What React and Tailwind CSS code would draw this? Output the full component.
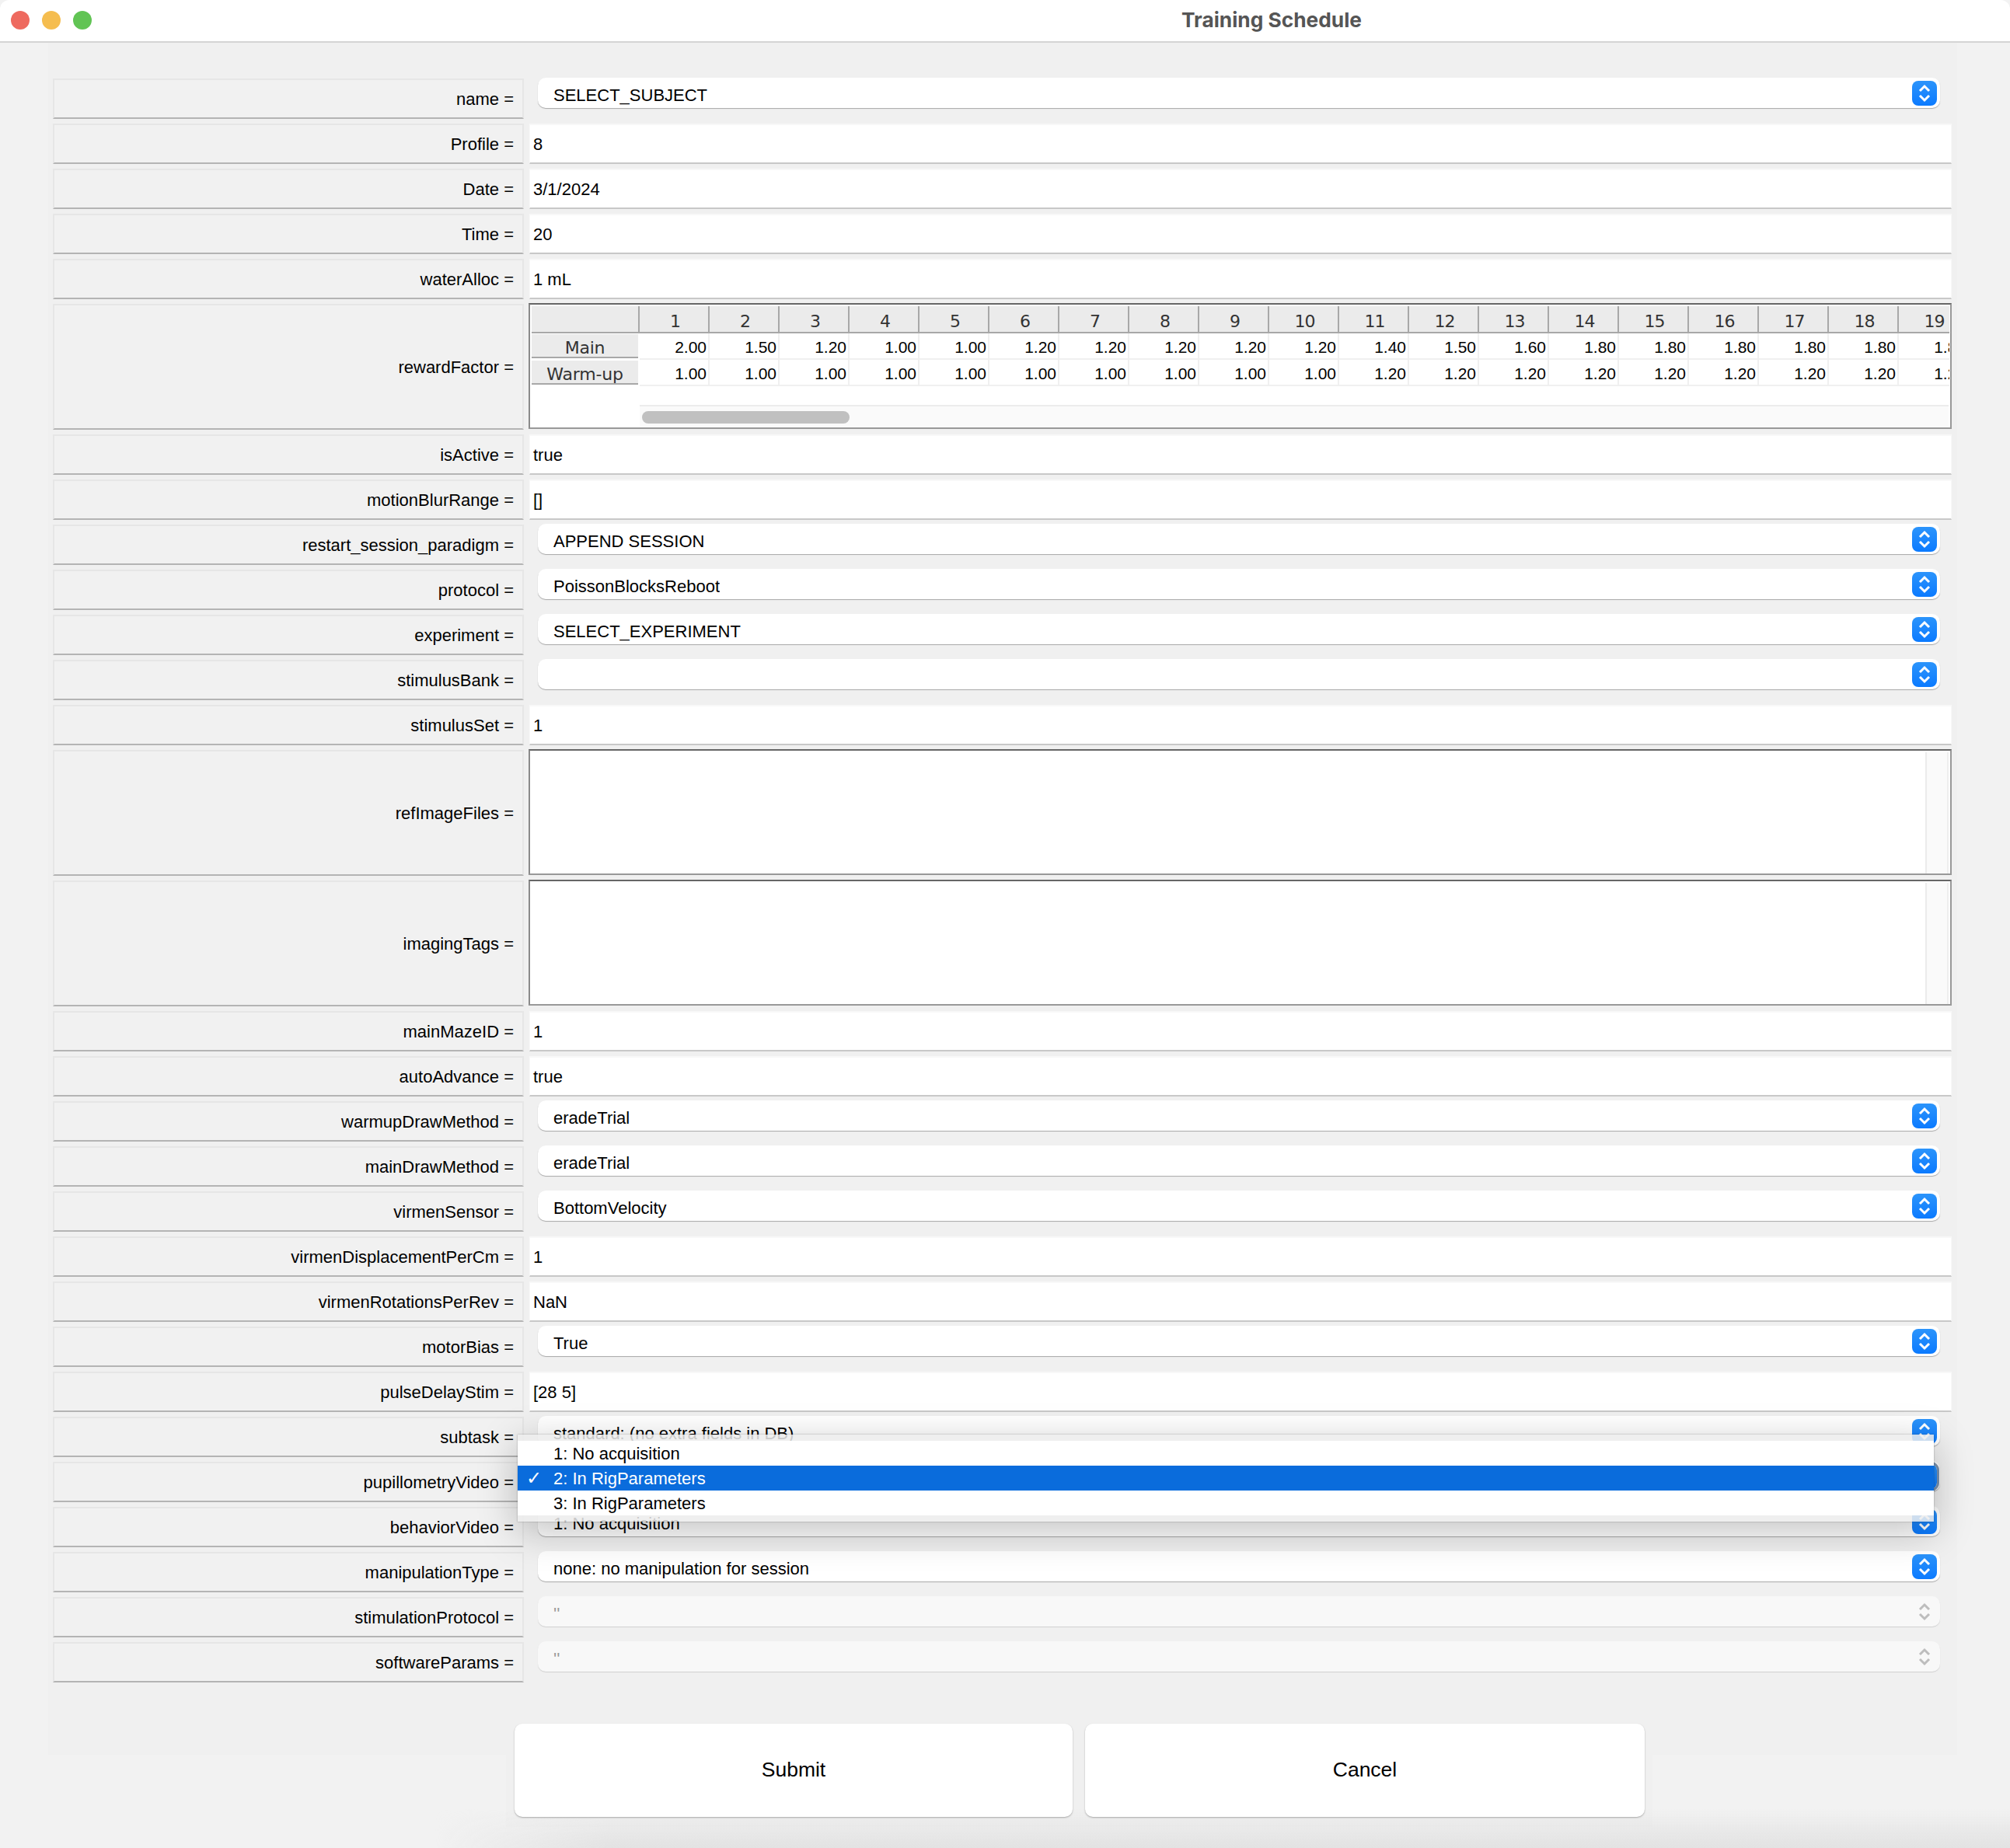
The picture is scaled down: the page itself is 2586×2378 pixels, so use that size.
const font = "font-['Liberation_Sans',Arial,sans-serif]";

const rows = [
    { label: 'name', kind: 'select', value: 'SELECT_SUBJECT' },
    { label: 'Profile', kind: 'input', value: '8' },
    { label: 'Date', kind: 'input', value: '3/1/2024' },
    { label: 'Time', kind: 'input', value: '20' },
    { label: 'waterAlloc', kind: 'input', value: '1 mL' },
    { label: 'rewardFactor', kind: 'table' },
    { label: 'isActive', kind: 'input', value: 'true' },
    { label: 'motionBlurRange', kind: 'input', value: '[]' },
    { label: 'restart_session_paradigm', kind: 'select', value: 'APPEND SESSION' },
    { label: 'protocol', kind: 'select', value: 'PoissonBlocksReboot' },
    { label: 'experiment', kind: 'select', value: 'SELECT_EXPERIMENT' },
    { label: 'stimulusBank', kind: 'select', value: '' },
    { label: 'stimulusSet', kind: 'input', value: '1' },
    { label: 'refImageFiles', kind: 'list' },
    { label: 'imagingTags', kind: 'list' },
    { label: 'mainMazeID', kind: 'input', value: '1' },
    { label: 'autoAdvance', kind: 'input', value: 'true' },
    { label: 'warmupDrawMethod', kind: 'select', value: 'eradeTrial' },
    { label: 'mainDrawMethod', kind: 'select', value: 'eradeTrial' },
    { label: 'virmenSensor', kind: 'select', value: 'BottomVelocity' },
    { label: 'virmenDisplacementPerCm', kind: 'input', value: '1' },
    { label: 'virmenRotationsPerRev', kind: 'input', value: 'NaN' },
    { label: 'motorBias', kind: 'select', value: 'True' },
    { label: 'pulseDelayStim', kind: 'input', value: '[28 5]' },
    { label: 'subtask', kind: 'select', value: 'standard: (no extra fields in DB)' },
    { label: 'pupillometryVideo', kind: 'focused', value: '2: In RigParameters' },
    { label: 'behaviorVideo', kind: 'select', value: '1: No acquisition' },
    { label: 'manipulationType', kind: 'select', value: 'none: no manipulation for session' },
    { label: 'stimulationProtocol', kind: 'disabled', value: "''" },
    { label: 'softwareParams', kind: 'disabled', value: "''" },
];

const mainRow = ['2.00', '1.50', '1.20', '1.00', '1.00', '1.20', '1.20', '1.20', '1.20', '1.20', '1.40', '1.50', '1.60', '1.80', '1.80', '1.80', '1.80', '1.80', '1.80'];
const warmRow = ['1.00', '1.00', '1.00', '1.00', '1.00', '1.00', '1.00', '1.00', '1.00', '1.00', '1.20', '1.20', '1.20', '1.20', '1.20', '1.20', '1.20', '1.20', '1.20'];

function Stepper({ muted }) {
    return (
        <svg width="32" height="32" viewBox="0 0 32 32" fill="none" stroke={muted ? '#bdbdbd' : '#fff'} strokeWidth="3" className="block">
            <path d="M10 13 L16 7 L22 13" />
            <path d="M10 19 L16 25 L22 19" />
        </svg>
    );
}

function SelectField({ value, kind }) {
    const disabled = kind === 'disabled';
    return (
        <div className="pl-[11px] pr-[15px]">
            <div className={`-mt-px h-[39px] rounded-[10px] flex items-center justify-between pl-[20px] pr-[4px] ${disabled ? 'bg-[#f8f8f8] shadow-[0_1px_1px_#d0d0d0]' : 'bg-white shadow-[0_1px_1px_#a8a8a8]'}`}>
                <span className={`pt-[5px] truncate ${disabled ? 'text-[#999]' : ''}`}>{value}</span>
                {disabled ? (
                    <Stepper muted />
                ) : (
                    <div className={`w-[32px] h-[32px] shrink-0 rounded-[8px] bg-gradient-to-b from-[#2b94fb] to-[#0a7aff] ${kind === 'focused' ? 'ring-2 ring-white outline-3 outline-[#7d93ae]' : ''}`}>
                        <Stepper />
                    </div>
                )}
            </div>
        </div>
    );
}

function InputField({ value }) {
    return (
        <div className="h-full bg-white border-t-2 border-x border-[#f8f8f8] border-b-2 border-b-[#c8c8c8] flex items-center pl-[4px]">
            {value}
        </div>
    );
}

function ListField() {
    return (
        <div className="-mt-px -ml-px h-[162px] bg-white border-2 border-[#999] border-t-[#666] border-l-[#8a8a8a] flex justify-end pt-[2px] pr-[2px]">
            <div className="w-[30px] bg-[#fafafa] border-l-2 border-r-2 border-l-[#ebebeb] border-r-[#eeeeee]" />
        </div>
    );
}

function RewardTable() {
    const columns = mainRow.map((_, i) => i + 1);
    return (
        <div className="-mt-px -ml-px h-[162px] bg-white border-2 border-[#999] border-t-[#666] border-l-[#8a8a8a] pt-[2px] pl-[2px] pr-[1px] flex flex-col">
            <div className="flex h-[35px] shrink-0 overflow-hidden font-['DejaVu_Sans',sans-serif] text-[22px] tracking-[-1px] text-[#333]">
                <div className="w-[139px] shrink-0 bg-[#ebebeb] border-b-2 border-r-2 border-[#a8a8a8]" />
                {columns.map((c) => (
                    <div key={c} className="w-[90px] shrink-0 pt-[5px] pl-[3px] bg-[#ebebeb] border-b-2 border-r-2 border-[#a8a8a8] flex items-center justify-center">
                        {c}
                    </div>
                ))}
            </div>
            <TableRow name="Main" values={mainRow} />
            <TableRow name="Warm-up" values={warmRow} />
            <div className="flex-1" />
            <div className="ml-[139px] h-[29px] shrink-0 bg-[#fafafa] border-t-2 border-[#ececec] pt-[6px] pl-[3px] mr-[1px]">
                <div className="w-[267px] h-[16px] rounded-full bg-[#c0c0c0]" />
            </div>
        </div>
    );
}

function TableRow({ name, values }) {
    return (
        <div className="flex h-[34px] shrink-0 overflow-hidden">
            <div className="w-[137px] mr-[2px] mt-[1px] h-[31px] shrink-0 bg-[#ebebeb] border-b-2 border-[#a8a8a8] flex items-end justify-center tracking-[-0.2px] font-['DejaVu_Sans',sans-serif] text-[22px] leading-[22px] text-[#333]">
                {name}
            </div>
            {values.map((v, i) => (
                <div key={i} className="w-[90px] shrink-0 pt-[3px] border-b-2 border-r-2 border-[#f0f0f0] flex items-center justify-end pr-[2px] text-[21px]">
                    {v}
                </div>
            ))}
        </div>
    );
}

function Popup() {
    const items = ['1: No acquisition', '2: In RigParameters', '3: In RigParameters'];
    return (
        <div className="absolute left-[666px] top-[1846px] w-[1822px] h-[112px] py-[8px] bg-[#ececec]/85 shadow-[0_12px_50px_rgba(0,0,0,0.25),0_0_2px_rgba(0,0,0,0.3)]">
            {items.map((item, i) => (
                <div key={item} className={`h-[32px] flex items-center pl-[46px] relative ${i === 1 ? 'bg-[#0a6cdc] text-white' : 'bg-white text-black'}`}>
                    {i === 1 && <span className="absolute left-[11px] font-['DejaVu_Sans',sans-serif] text-[24px] font-bold">✓</span>}
                    {item}
                </div>
            ))}
        </div>
    );
}

export default function App() {
    return (
        <div className={`relative w-[2586px] h-[2378px] overflow-hidden bg-[#f2f2f2] text-black text-[22px] ${font}`}>
            <div className="h-[55px] bg-white border-b-2 border-[#d4d4d4] flex items-center relative rounded-t-[12px]">
                <div className="absolute left-[14px] top-[14px] flex gap-[16px]">
                    <div className="w-[24px] h-[24px] rounded-full bg-[#ee6a5f]" />
                    <div className="w-[24px] h-[24px] rounded-full bg-[#f5bd4f]" />
                    <div className="w-[24px] h-[24px] rounded-full bg-[#61c454]" />
                </div>
                <div className="flex-1 pl-[686px] -mt-[2px] text-center font-['Inter',sans-serif] font-bold text-[26.3px] text-[#555]">Training Schedule</div>
            </div>

            <div className="ml-[62px] w-[2456px] h-[2203px] bg-[#f0f0f0] pt-[46px] pl-[6px]">
                <div className="flex flex-col gap-[6px] w-[2443px]">
                    {rows.map((row) => (
                        <div key={row.label} className={`flex gap-[7px] ${row.kind === 'table' || row.kind === 'list' ? 'h-[162px]' : 'h-[52px]'}`}>
                            <div className="w-[606px] shrink-0 bg-[#f1f1f1] border-2 border-[#e6e6e6] border-b-[#b4b4b4] flex items-center justify-end pr-[11px]">
                                {row.label} =
                            </div>
                            <div className="flex-1 min-w-0">
                                {row.kind === 'input' && <InputField value={row.value} />}
                                {row.kind === 'table' && <RewardTable />}
                                {row.kind === 'list' && <ListField />}
                                {(row.kind === 'select' || row.kind === 'focused' || row.kind === 'disabled') && (
                                    <SelectField value={row.value} kind={row.kind} />
                                )}
                            </div>
                        </div>
                    ))}
                </div>
            </div>

            <div className="ml-[651px] w-[1475px] h-[93px] bg-[#f0f0f0]" />

            <div className="absolute left-0 right-0 bottom-0 h-[50px] pl-[560px]">
                <div className="h-full bg-gradient-to-b from-transparent to-[#e2e2e2] [mask-image:linear-gradient(to_right,transparent,black_220px)]" />
            </div>

            <div className="absolute left-[662px] top-[2218px] flex gap-[16px]">
                <div className="w-[718px] h-[120px] bg-white rounded-[10px] shadow-[0_1px_2px_#a8a8a8] flex items-center justify-center text-[26.5px]">Submit</div>
                <div className="w-[720px] h-[120px] bg-white rounded-[10px] shadow-[0_1px_2px_#a8a8a8] flex items-center justify-center text-[26.5px]">Cancel</div>
            </div>

            <Popup />
        </div>
    );
}
